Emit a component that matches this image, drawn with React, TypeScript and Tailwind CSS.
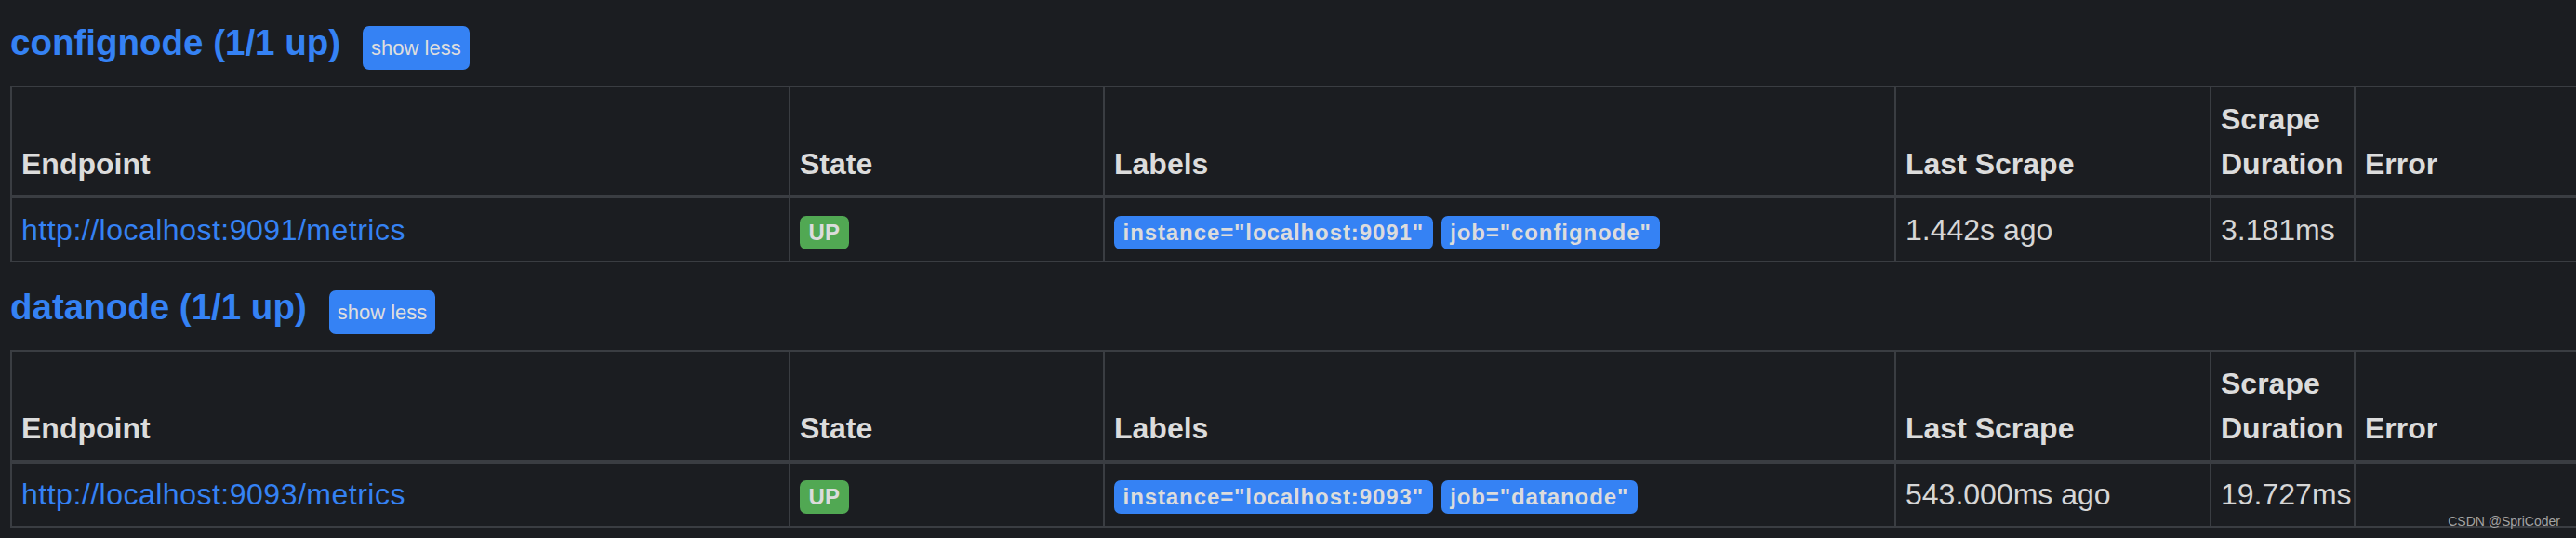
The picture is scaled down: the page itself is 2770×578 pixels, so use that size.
import React from "react";

type Target = {
  job: string;
  endpoint: string;
  instance: string;
  lastScrape: string;
  duration: string;
};

const TARGETS: Target[] = [
  {
    job: "confignode",
    endpoint: "http://localhost:9091/metrics",
    instance: "localhost:9091",
    lastScrape: "1.442s ago",
    duration: "3.181ms",
  },
  {
    job: "datanode",
    endpoint: "http://localhost:9093/metrics",
    instance: "localhost:9093",
    lastScrape: "543.000ms ago",
    duration: "19.727ms",
  },
];

const th =
  "border-2 border-b-4 border-[#3a3d42] px-[10px] py-[9.6px] text-left align-bottom text-[32px] leading-[48px] font-bold text-[#dcdcdc]";
const td =
  "border-2 border-[#3a3d42] px-[10px] py-[9.6px] text-left align-top text-[32px] leading-[48px] text-[#d6d6d6]";

function Pool({ t }: { t: Target }) {
  return (
    <section className="mb-[24px]">
      <div className="flex items-baseline">
        <h2 className="text-[38.5px] leading-[47px] font-bold text-[#3582f4]">
          {t.job} (1/1 up)
        </h2>
        <button className="ml-[24px] rounded-[7px] bg-[#3582f4] px-[9px] py-[7px] text-[22px] leading-[33px] text-[#dedede]">
          show less
        </button>
      </div>
      <table className="mt-[17px] w-[2800px] table-fixed border-collapse border-2 border-[#3a3d42]">
        <colgroup>
          <col className="w-[837px]" />
          <col className="w-[338px]" />
          <col className="w-[851px]" />
          <col className="w-[339px]" />
          <col className="w-[155px]" />
          <col />
        </colgroup>
        <thead>
          <tr>
            <th className={th}>Endpoint</th>
            <th className={th}>State</th>
            <th className={th}>Labels</th>
            <th className={th}>Last Scrape</th>
            <th className={th}>Scrape Duration</th>
            <th className={th}>Error</th>
          </tr>
        </thead>
        <tbody>
          <tr>
            <td className={td}>
              <a className="tracking-[0.5px] text-[#3582f4]">{t.endpoint}</a>
            </td>
            <td className={td}>
              <span className="inline-block rounded-[7px] bg-[#51a853] px-[9.6px] py-[6px] text-[24px] leading-none font-bold text-[#dcdcdc]">
                UP
              </span>
            </td>
            <td className={td}>
              <span className="mr-[9px] inline-block rounded-[7px] bg-[#3582f4] px-[9.6px] py-[6px] text-[24px] leading-none font-bold tracking-[0.9px] text-[#dcdcdc]">
                instance="{t.instance}"
              </span>
              <span className="inline-block rounded-[7px] bg-[#3582f4] px-[9.6px] py-[6px] text-[24px] leading-none font-bold tracking-[0.9px] text-[#dcdcdc]">
                job="{t.job}"
              </span>
            </td>
            <td className={td}>{t.lastScrape}</td>
            <td className={td}>{t.duration}</td>
            <td className={td}></td>
          </tr>
        </tbody>
      </table>
    </section>
  );
}

export default function App() {
  return (
    <div className="relative h-[578px] w-full overflow-hidden bg-[#1b1d21] pt-[22px] pl-[11px] font-['Liberation_Sans',Arial,sans-serif]">
      {TARGETS.map((t) => (
        <Pool key={t.job} t={t} />
      ))}
      <span className="absolute top-[552px] right-[17px] text-[14px] leading-[16px] text-[#a3a3a3]">
        CSDN @SpriCoder
      </span>
    </div>
  );
}
